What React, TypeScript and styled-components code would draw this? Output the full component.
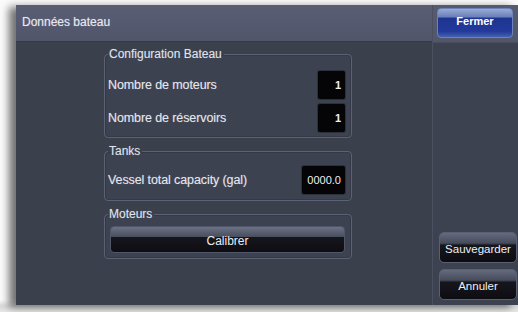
import React from 'react';
import styled, { createGlobalStyle } from 'styled-components';

const GlobalStyle = createGlobalStyle`
  html, body {
    margin: 0;
    padding: 0;
    background: #fbfbfb;
    overflow: hidden;
  }
  * {
    box-sizing: border-box;
  }
`;

const App = () => {
  return (
    <Page>
      <GlobalStyle />
      <Window>
        <MainColumn>
          <TitleBar>Données bateau</TitleBar>
          <Content>
            <Group>
              <Legend>Configuration Bateau</Legend>
              <Row>
                <Label>Nombre de moteurs</Label>
                <ValueBox>1</ValueBox>
              </Row>
              <Row>
                <Label>Nombre de réservoirs</Label>
                <ValueBox>1</ValueBox>
              </Row>
            </Group>

            <Group padTop={8} padBottom={6}>
              <Legend>Tanks</Legend>
              <Row>
                <Label>Vessel total capacity (gal)</Label>
                <ValueBox wide>0000.0</ValueBox>
              </Row>
            </Group>

            <Group padTop={5} padBottom={5}>
              <Legend>Moteurs</Legend>
              <CalibrateButton>Calibrer</CalibrateButton>
            </Group>
          </Content>
        </MainColumn>

        <SideColumn>
          <CloseButton>Fermer</CloseButton>
          <SideSpacer />
          <SideButton>Sauvegarder</SideButton>
          <SideButton>Annuler</SideButton>
        </SideColumn>
      </Window>
    </Page>
  );
};

export default App;

const Page = styled.div`
  width: 518px;
  height: 312px;
  padding: 5px 0 0 16px;
  font-family: 'Liberation Sans', Arial, sans-serif;
  background: linear-gradient(to bottom, #fbfbfb 0, #fbfbfb 300px, #d9d9d9 306px, #e8e8e8 312px);
`;

const Window = styled.div`
  width: 502px;
  height: 300px;
  display: flex;
  background: #3b404d;
  box-shadow: -7px 2px 8px rgba(0, 0, 0, 0.55);
`;

const MainColumn = styled.div`
  flex: 1;
  display: flex;
  flex-direction: column;
`;

const TitleBar = styled.div`
  height: 37px;
  display: flex;
  align-items: center;
  padding: 0 0 2px 6px;
  background: linear-gradient(to bottom, #5a5e74, #50556a);
  border-bottom: 1px solid #363a47;
  color: #e6e8f2;
  font-size: 12px;
  text-shadow: 0 0 1px rgba(255, 255, 255, 0.4);
`;

const Content = styled.div`
  flex: 1;
  display: flex;
  flex-direction: column;
  align-items: center;
  gap: 6px;
  padding: 5px 0 0 8px;
`;

const Group = styled.fieldset<{ padTop?: number; padBottom?: number }>`
  width: 248px;
  margin: 0;
  padding: ${({ padTop = 10 }) => padTop}px 6px ${({ padBottom = 5 }) => padBottom}px 3px;
  border: 1px solid #5c6273;
  border-radius: 4px;
  background: #3d4250;
  box-shadow: inset 0 0 0 1px #353947;
  display: flex;
  flex-direction: column;
  gap: 5px;
`;

const Legend = styled.legend`
  padding: 0 2px 0 1px;
  margin-left: 0;
  color: #dfe2ec;
  font-size: 12px;
  line-height: 14px;
  text-shadow: 0 0 1px rgba(255, 255, 255, 0.3);
`;

const Row = styled.div`
  display: flex;
  align-items: center;
  justify-content: space-between;
  height: 28px;
`;

const Label = styled.span`
  color: #e4e6ee;
  font-size: 12.5px;
  letter-spacing: -0.1px;
  text-shadow: 0 0 1px rgba(255, 255, 255, 0.3);
`;

const ValueBox = styled.div<{ wide?: boolean }>`
  width: ${({ wide }) => (wide ? 43 : 27)}px;
  height: 28px;
  display: flex;
  align-items: center;
  justify-content: flex-end;
  padding-right: 4px;
  background: #050507;
  border-radius: 2px;
  color: #f0f0f0;
  font-size: 11px;
  font-weight: ${({ wide }) => (wide ? 'normal' : 'bold')};
  box-shadow: 0 0 0 1px #2c303a;
`;

const CalibrateButton = styled.button`
  height: 27px;
  margin: 0 0 0 2px;
  border: 1px solid #50566a;
  border-radius: 4px;
  background: linear-gradient(
    to bottom,
    #6c7284 0,
    #4a4f5f 38%,
    #15151c 42%,
    #0d0d12 100%
  );
  color: #eceef4;
  font-family: 'Liberation Sans', Arial, sans-serif;
  font-size: 12px;
  padding: 2px 0 0;
`;

const SideColumn = styled.div`
  width: 86px;
  display: flex;
  flex-direction: column;
  padding: 3px 3px 5px 4px;
  border-left: 1px solid #4b5060;
  background: linear-gradient(to bottom, #575b70 0, #52566b 37px, #3d4250 38px, #3d4250 100%);
`;

const CloseButton = styled.button`
  width: 76px;
  height: 30px;
  border: 1px solid #6d82b8;
  border-radius: 4px;
  background: linear-gradient(
    to bottom,
    #9aabd4 0,
    #6a80bc 28%,
    #1e3490 33%,
    #233a9c 80%,
    #4560b0 100%
  );
  color: #ffffff;
  font-family: 'Liberation Sans', Arial, sans-serif;
  font-size: 11px;
  font-weight: bold;
  padding: 0 0 4px;
`;

const SideSpacer = styled.div`
  flex: 1;
`;

const SideButton = styled.button`
  width: 78px;
  height: 31px;
  margin: 6px 0 0 2px;
  border: 1px solid #5a6073;
  border-radius: 5px;
  background: linear-gradient(
    to bottom,
    #656b7d 0,
    #474c5c 35%,
    #16161d 42%,
    #0c0c11 100%
  );
  color: #eef0f6;
  font-family: 'Liberation Sans', Arial, sans-serif;
  font-size: 11.5px;
  padding: 3px 0 0;
`;
